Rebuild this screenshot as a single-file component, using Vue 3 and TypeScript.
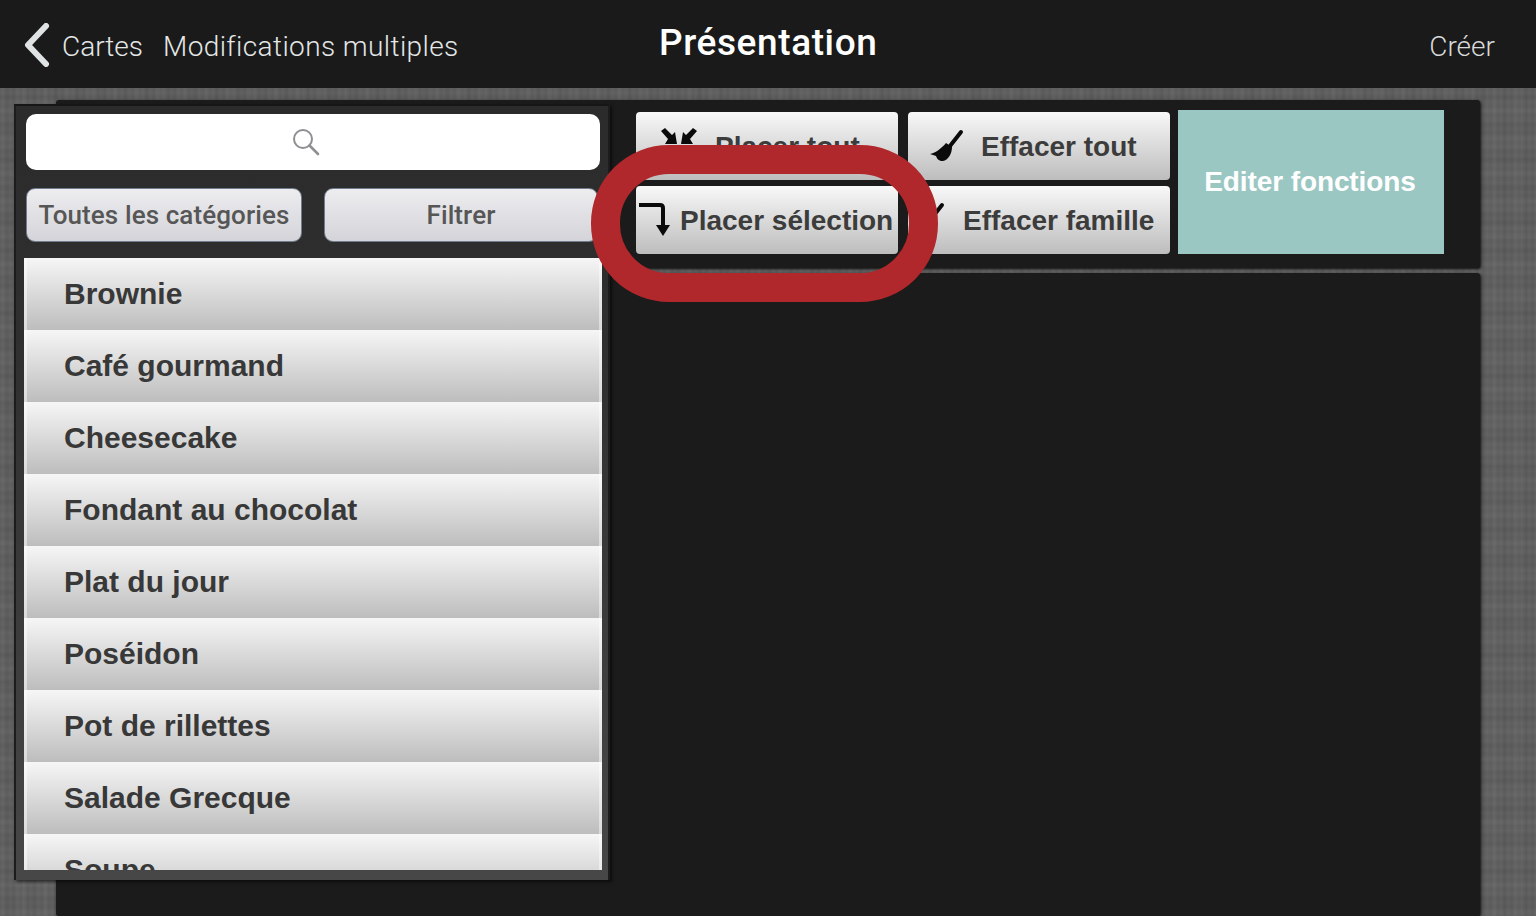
<script setup lang="ts">
const items = [
  "Brownie",
  "Café gourmand",
  "Cheesecake",
  "Fondant au chocolat",
  "Plat du jour",
  "Poséidon",
  "Pot de rillettes",
  "Salade Grecque",
  "Soupe",
];
</script>

<template>
  <div class="screen">
    <header class="topbar">
      <div class="nav-left">
        <svg class="back" width="26" height="44" viewBox="0 0 26 44">
          <path d="M22 3 L4 22 L22 41" fill="none" stroke="#dfe3e3" stroke-width="6" stroke-linecap="round" stroke-linejoin="round" />
        </svg>
        <span class="nav-link">Cartes</span>
        <span class="nav-link second">Modifications multiples</span>
      </div>
      <h1 class="title">Présentation</h1>
      <span class="nav-link create">Créer</span>
    </header>

    <div class="stage">
      <aside class="sidebar">
        <div class="search">
          <svg width="28" height="28" viewBox="0 0 28 28">
            <circle cx="11" cy="11" r="9" fill="none" stroke="#8e8e93" stroke-width="2" />
            <path d="M17.5 17.5 L26 26" stroke="#8e8e93" stroke-width="2.6" stroke-linecap="round" />
          </svg>
        </div>
        <div class="filters">
          <button class="filter cat">Toutes les catégories</button>
          <button class="filter">Filtrer</button>
        </div>
        <ul class="list">
          <li v-for="item in items" :key="item" class="row">{{ item }}</li>
        </ul>
      </aside>

      <main class="content">
        <section class="toolbar">
          <div class="tools">
            <button class="tool">
              <svg class="ico" width="40" height="36" viewBox="0 0 40 36" fill="#0a0a0a">
                <path d="M2 4 L6 1 L13 8 L16 5 L18 17 L6 17 L9 12 Z" />
                <path d="M38 4 L34 1 L27 8 L24 5 L22 17 L34 17 L31 12 Z" />
                <path d="M2 32 L6 35 L13 28 L16 31 L18 19 L6 19 L9 24 Z" />
                <path d="M38 32 L34 35 L27 28 L24 31 L22 19 L34 19 L31 24 Z" />
              </svg>
              <span class="tool-label">Placer tout</span>
            </button>
            <button class="tool">
              <svg class="ico" width="36" height="36" viewBox="0 0 36 36">
                <path d="M31 3 L20 17" stroke="#0a0a0a" stroke-width="4" fill="none" stroke-linecap="round" />
                <path d="M16 14 L22 18 C22 25 18 31 13 32 C9 32 7 30 6 27 L0 25 C5 24 11 20 16 14 Z" fill="#0a0a0a" />
              </svg>
              <span class="tool-label">Effacer tout</span>
            </button>
            <button class="tool">
              <svg class="ico" width="32" height="34" viewBox="0 0 32 34">
                <path d="M1 3 H22 Q25 3 25 6 V24" fill="none" stroke="#0a0a0a" stroke-width="4" />
                <path d="M18 23 H32 L25 34 Z" fill="#0a0a0a" />
              </svg>
              <span class="tool-label">Placer sélection</span>
            </button>
            <button class="tool">
              <svg class="ico" width="36" height="36" viewBox="0 0 36 36">
                <path d="M31 3 L20 17" stroke="#0a0a0a" stroke-width="4" fill="none" stroke-linecap="round" />
                <path d="M16 14 L22 18 C22 25 18 31 13 32 C9 32 7 30 6 27 L0 25 C5 24 11 20 16 14 Z" fill="#0a0a0a" />
              </svg>
              <span class="tool-label">Effacer famille</span>
            </button>
          </div>
          <button class="edit">Editer fonctions</button>
        </section>
        <section class="canvas"></section>
      </main>

      <div class="ring"></div>
    </div>
  </div>
</template>

<style>
html,
body {
  margin: 0;
  height: 100%;
  overflow: hidden;
}
</style>

<style scoped>
.screen {
  width: 1536px;
  height: 916px;
  display: flex;
  flex-direction: column;
  overflow: hidden;
  font-family: Roboto, "Liberation Sans", sans-serif;
}

.topbar {
  height: 88px;
  flex: none;
  background: #1a1a1a;
  display: flex;
  align-items: center;
  justify-content: space-between;
  padding: 6px 41px 0 24px;
  position: relative;
  box-sizing: border-box;
}
.nav-left {
  display: flex;
  align-items: center;
}
.back {
  margin: -4px 12px 0 0;
}
.nav-link {
  font-size: 28px;
  font-weight: 300;
  color: #e4e7e7;
  line-height: 32px;
}
.second {
  margin-left: 20px;
  letter-spacing: 0.4px;
}
.create {
  color: #d8dbdb;
}
.title {
  position: absolute;
  left: 659px;
  top: 21px;
  margin: 0;
  font-size: 37px;
  font-weight: 500;
  letter-spacing: 0.6px;
  line-height: 44px;
  color: #fff;
}

.stage {
  flex: 1;
  min-height: 0;
  position: relative;
  display: flex;
  align-items: flex-start;
  padding: 12px 0 0 14px;
  box-sizing: border-box;
  background-color: #606060;
  background-image:
    repeating-linear-gradient(90deg, rgba(0, 0, 0, 0.07), rgba(0, 0, 0, 0) 3px, rgba(0, 0, 0, 0.07) 7px),
    repeating-linear-gradient(90deg, rgba(255, 255, 255, 0.04), rgba(255, 255, 255, 0) 9px, rgba(255, 255, 255, 0.04) 23px),
    repeating-linear-gradient(0deg, rgba(0, 0, 0, 0.06), rgba(0, 0, 0, 0) 4px, rgba(0, 0, 0, 0.06) 9px),
    repeating-linear-gradient(0deg, rgba(255, 255, 255, 0.04), rgba(255, 255, 255, 0) 13px, rgba(255, 255, 255, 0.04) 31px);
}

.sidebar {
  width: 596px;
  height: 776px;
  flex: none;
  position: relative;
  z-index: 1;
  margin-top: 4px;
  box-sizing: border-box;
  background: linear-gradient(#2b2b2b, #2f2f2f 30%, #474747);
  border-top: 2px solid #161616;
  border-left: 2px solid #1c1c1c;
  border-right: 2px solid #1c1c1c;
  box-shadow: 2px 2px 3px rgba(0, 0, 0, 0.55);
  padding: 8px 6px 10px 8px;
  display: flex;
  flex-direction: column;
}
.search {
  height: 56px;
  flex: none;
  margin: 0 2px;
  border-radius: 10px;
  background: #fff;
  display: flex;
  align-items: center;
  justify-content: center;
  padding-right: 14px;
}
.filters {
  display: flex;
  gap: 22px;
  margin: 18px 4px 16px 2px;
  flex: none;
}
.filter {
  height: 54px;
  flex: 1;
  padding: 0;
  border: 1px solid #717d8e;
  border-radius: 9px;
  background: linear-gradient(#ededf0, #d3d3d9);
  color: #565656;
  font: 500 26px Roboto, sans-serif;
  letter-spacing: 0.1px;
}
.filter.cat {
  flex: none;
  width: 276px;
}
.list {
  list-style: none;
  margin: 0;
  padding: 0;
  flex: 1;
  min-height: 0;
  overflow: hidden;
}
.row {
  height: 72px;
  box-sizing: border-box;
  padding: 17px 0 0 40px;
  background: linear-gradient(#f6f6f6, #bdbdbd);
  box-shadow: inset 3px 0 rgba(255, 255, 255, 0.45), inset -3px 0 rgba(255, 255, 255, 0.45);
  color: #383838;
  font: 700 30px/38px "Liberation Sans", sans-serif;
}

.content {
  flex: none;
  width: 1424px;
  height: 816px;
  margin-left: -554px;
  display: flex;
  flex-direction: column;
  gap: 5px;
}
.toolbar {
  height: 168px;
  flex: none;
  box-sizing: border-box;
  background: #1b1b1b;
  border-radius: 3px;
  box-shadow: 1px 1px 3px #0a0a0a;
  display: flex;
  padding: 10px 0 0 580px;
}
.tools {
  display: grid;
  grid-template-columns: 262px 262px;
  grid-auto-rows: 68px;
  column-gap: 10px;
  row-gap: 6px;
  padding-top: 2px;
}
.tool {
  position: relative;
  display: flex;
  align-items: center;
  justify-content: flex-start;
  padding: 0;
  border: 0;
  border-radius: 4px;
  background: linear-gradient(#f8f8f8, #bdbdbd);
  color: #3c3c3c;
  font: 700 28px "Liberation Sans", sans-serif;
  white-space: nowrap;
  overflow: hidden;
}
.ico {
  position: absolute;
  left: 23px;
  top: 15px;
}
.tool-label {
  position: absolute;
  top: 18px;
  line-height: 34px;
}
.tool:nth-child(1) .tool-label {
  left: 79px;
}
.tool:nth-child(2) .tool-label {
  left: 73px;
}
.tool:nth-child(2) .ico {
  left: 22px;
  top: 17px;
}
.tool:nth-child(3) .tool-label {
  left: 44px;
}
.tool:nth-child(3) .ico {
  left: 2px;
  top: 16px;
  overflow: visible;
}
.tool:nth-child(4) .tool-label {
  left: 55px;
}
.tool:nth-child(4) .ico {
  left: 3px;
  top: 16px;
}
.edit {
  width: 266px;
  height: 144px;
  margin-left: 8px;
  border: 0;
  padding: 0 2px 0 0;
  background: #9bc7c3;
  color: #fff;
  font: 700 28px "Liberation Sans", sans-serif;
  letter-spacing: -0.1px;
}
.canvas {
  flex: 1;
  background: #1b1b1b;
  border-radius: 3px;
  box-shadow: 1px 1px 3px #0a0a0a;
}

.ring {
  position: absolute;
  z-index: 2;
  left: 591px;
  top: 57px;
  width: 347px;
  height: 157px;
  box-sizing: border-box;
  border: 29px solid #b0282c;
  border-radius: 78px;
}
</style>
